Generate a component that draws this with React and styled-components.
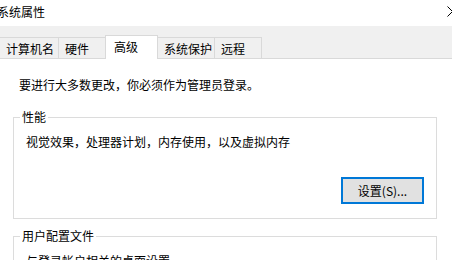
import React from "react";
import styled, { createGlobalStyle } from "styled-components";

const GlobalStyle = createGlobalStyle`
  body {
    margin: 0;
    background: #ffffff;
    font-family: "Noto Sans CJK SC", "Microsoft YaHei", sans-serif;
    font-size: 12px;
    color: #000000;
  }
`;

const Window = styled.div`
  width: 452px;
  height: 260px;
  overflow: hidden;
  background: #ffffff;
  display: flex;
  flex-direction: column;
`;

const TitleBar = styled.div`
  height: 26px;
  flex: none;
  display: flex;
  align-items: center;
  justify-content: space-between;
  box-sizing: border-box;
  padding-bottom: 3px;
`;

const Title = styled.span`
  margin-left: -3px;
  line-height: 16px;
`;

const CloseIcon = styled.svg`
  width: 11px;
  height: 11px;
  margin-right: -6px;
  margin-top: -1px;
  flex: none;
`;

const TabStrip = styled.div`
  height: 33px;
  flex: none;
  box-sizing: border-box;
  display: flex;
  align-items: flex-end;
  background: #f0f0f0;
  border-bottom: 1px solid #d9d9d9;
  margin-left: -1px;
`;

const Tab = styled.div`
  box-sizing: border-box;
  width: ${props => props.w}px;
  height: ${props => (props.active ? "24px" : "21px")};
  margin-right: -1px;
  margin-bottom: ${props => (props.active ? "-1px" : "0")};
  padding: ${props => (props.active ? "3px 0 0 8px" : "3px 0 0 6px")};
  border: 1px solid #d9d9d9;
  border-bottom: none;
  background: ${props => (props.active ? "#ffffff" : "#f0f0f0")};
  position: relative;
  z-index: ${props => (props.active ? 1 : 0)};
  line-height: 16px;
  white-space: nowrap;
`;

const Page = styled.div`
  flex: 1;
  padding: 18px 0 0 13px;
`;

const Note = styled.p`
  margin: 0 0 16px 6px;
  line-height: 16px;
`;

const Group = styled.fieldset`
  margin: 0 0 9px 0;
  width: 424px;
  box-sizing: border-box;
  border: 1px solid #dcdcdc;
  padding: 9px 12px 14px 12px;
  min-width: 0;
`;

const Legend = styled.legend`
  padding: 0 2px;
  margin-left: -6px;
  line-height: 16px;
`;

const GroupText = styled.div`
  line-height: 16px;
`;

const ButtonRow = styled.div`
  display: flex;
  justify-content: flex-end;
  margin-top: 27px;
`;

const Button = styled.button`
  width: 83px;
  height: 27px;
  box-sizing: border-box;
  border: 2px solid #0078d7;
  background: #e1e1e1;
  font-family: inherit;
  font-size: 12px;
  color: #000000;
  padding: 0;
  line-height: 16px;
`;

const tabs = [
  { label: "计算机名", w: 60 },
  { label: "硬件", w: 48 },
  { label: "高级", w: 53, active: true },
  { label: "系统保护", w: 58 },
  { label: "远程", w: 48 },
];

const App = () => {
  return (
    <>
      <GlobalStyle />
      <Window>
        <TitleBar>
          <Title>系统属性</Title>
          <CloseIcon viewBox="0 0 11 11">
            <path d="M0.5 0.5 L10.5 10.5 M10.5 0.5 L0.5 10.5" stroke="#000" strokeWidth="1" fill="none" />
          </CloseIcon>
        </TitleBar>
        <TabStrip>
          {tabs.map(t => (
            <Tab key={t.label} w={t.w} active={t.active}>
              {t.label}
            </Tab>
          ))}
        </TabStrip>
        <Page>
          <Note>要进行大多数更改，你必须作为管理员登录。</Note>
          <Group>
            <Legend>性能</Legend>
            <GroupText>视觉效果，处理器计划，内存使用，以及虚拟内存</GroupText>
            <ButtonRow>
              <Button>设置(S)...</Button>
            </ButtonRow>
          </Group>
          <Group>
            <Legend>用户配置文件</Legend>
            <GroupText>与登录帐户相关的桌面设置</GroupText>
          </Group>
        </Page>
      </Window>
    </>
  );
};

export default App;
